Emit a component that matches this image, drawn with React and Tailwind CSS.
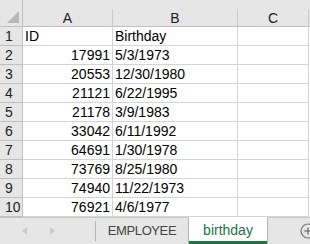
const rows = [
  ['ID', 'Birthday'],
  ['17991', '5/3/1973'],
  ['20553', '12/30/1980'],
  ['21121', '6/22/1995'],
  ['21178', '3/9/1983'],
  ['33042', '6/11/1992'],
  ['64691', '1/30/1978'],
  ['73769', '8/25/1980'],
  ['74940', '11/22/1973'],
  ['76921', '4/6/1977'],
]

const cols = 'grid grid-cols-[23px_90px_125px_71px_1px]'

export default function App() {
  return (
    <div className="flex h-[244px] w-[310px] flex-col overflow-hidden bg-white font-['Liberation_Sans',Arial,sans-serif] text-[14px] text-black">
      {/* column headers */}
      <div className={`${cols} h-[27px] bg-[#e6e6e6] border-b border-[#bfbfbf]`}>
        <div className="relative border-r border-[#bfbfbf]">
          <div className="absolute bottom-[3px] right-[3px] h-0 w-0 border-b-[12px] border-l-[12px] border-b-[#b8b8b8] border-l-transparent" />
        </div>
        {['A', 'B', 'C'].map((c) => (
          <div key={c} className="mt-[9px] flex items-center justify-center border-r border-[#c8c8c8] leading-none text-[#222]">
            {c}
          </div>
        ))}
        <div />
      </div>

      {/* sheet rows */}
      {rows.map((r, i) => (
        <div key={i} className={`${cols} h-[19px]`}>
          <div className="flex items-center border-r border-b border-[#bfbfbf] bg-[#e6e6e6] pl-[5px] leading-none text-[#222]">
            {i + 1}
          </div>
          <div
            className={`flex items-center border-r border-b border-[#d4d4d4] px-[2px] leading-none ${
              i === 0 ? 'justify-start' : 'justify-end'
            }`}
          >
            {r[0]}
          </div>
          <div className="flex items-center border-r border-b border-[#d4d4d4] px-[2px] leading-none">{r[1]}</div>
          <div className="border-r border-b border-[#d4d4d4]" />
          <div />
        </div>
      ))}

      {/* sheet tabs */}
      <div className="flex flex-1 items-stretch border-t border-[#c6c6c6] bg-[#e6e6e6]">
        <div className="flex w-[95px] items-center gap-[23px] pl-[22px]">
          <svg width="5" height="8" viewBox="0 0 5 8">
            <path d="M5 0v8L0 4z" fill="#cacaca" />
          </svg>
          <svg width="5" height="8" viewBox="0 0 5 8">
            <path d="M0 0v8l5-4z" fill="#cacaca" />
          </svg>
        </div>
        <div className="my-[3px] w-px bg-[#b4b4b4]" />
        <div className="flex w-[93px] items-center justify-center border-r border-[#b4b4b4] text-[13px] tracking-[-0.4px] text-[#444]">
          EMPLOYEE
        </div>
        <div className="-mt-px flex w-[78px] items-center justify-center border-b-[3px] border-[#217346] bg-white pt-[2px] text-[#217346]">
          birthday
        </div>
        <div className="flex flex-1 items-center justify-end border-l border-[#b4b4b4]">
          <svg width="16" height="16" viewBox="0 0 16 16" className="mr-[-6px]">
            <circle cx="8" cy="8" r="7" fill="none" stroke="#777" strokeWidth="1.2" />
            <path d="M8 4.5v7M4.5 8h7" stroke="#777" strokeWidth="1.3" />
          </svg>
        </div>
      </div>
    </div>
  )
}
